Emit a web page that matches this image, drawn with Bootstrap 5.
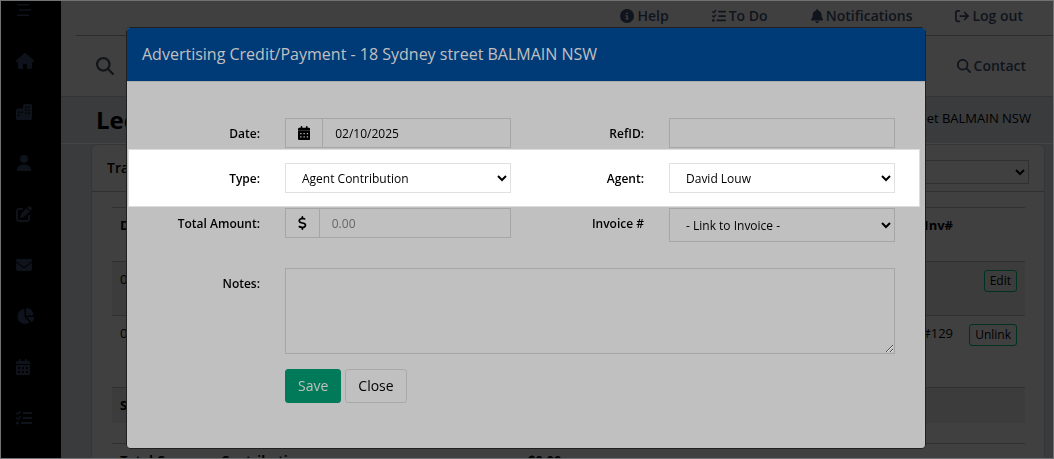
<!DOCTYPE html>
<html lang="en">
<head>
<meta charset="utf-8">
<meta name="viewport" content="width=device-width, initial-scale=1">
<title>Advertising Credit/Payment</title>
<link href="https://cdn.jsdelivr.net/npm/bootstrap@5.3.0/dist/css/bootstrap.min.css" rel="stylesheet">
<style>
  body { font-family: "Open Sans", sans-serif; font-size: 13px; line-height: 20px; color: #000; background: #3a3b3d; }
  .app-frame { height: 100vh; border: 1px solid #707273; }
  .side-rail { width: 60px; background: #000; padding: 1px 0 0 15px; gap: 35px; }
  .side-rail a { color: #0e131b; height: 16px; line-height: 0; }
  svg { fill: currentColor; }
  .side-rail svg { height: 16px; }
  .app-main { min-width: 0; }
  .top-zone { background: #404040; border-bottom: 1px solid #333436; color: #10141c; font-size: 14px; font-weight: 600; }
  .top-zone a { color: #10141c; text-decoration: none; display: flex; align-items: center; gap: 3px; }
  .top-zone a svg { height: 14px; }
  .top-links { height: 35px; margin-left: 15px; padding: 0 30px 4px 0; gap: 43px; border-bottom: 1px solid #2c2c2d; }
  .search-line { height: 60px; padding: 0 27px 0 35px; }
  .search-line button { color: #14161a; line-height: 0; }
  .title-line { height: 47px; padding: 0 22px 0 35px; border-bottom: 1px solid #444547; }
  .title-line h1 { font-size: 24px; line-height: 30px; font-weight: 700; }
  .ledger { margin: 0 8px 0 30px; background: #404040; border: 1px solid #353638; border-radius: 6px; }
  .ledger-head { height: 47px; padding: 0 15px; border-bottom: 1px solid #303030; font-weight: 600; font-size: 14px; }
  .ledger-head select { width: 226px; height: 24px; background: #404040; color: #000; border: 1px solid #303030; border-radius: 0; }
  .ledger-body { padding: 15px 19px 0 20px; }
  .ledger-table { width: 100%; table-layout: fixed; }
  .ledger-table th, .ledger-table td { padding: 7px 8px 8px; vertical-align: top; border-top: 1px solid #303030; white-space: nowrap; }
  .ledger-table th { font-weight: 700; }
  .ledger-table .tinted { background: #3c3c3c; }
  .totals-table { margin-top: 20px; }
  .totals-table th { padding-top: 6px; }
  .btn-mini { font-size: 12px; line-height: 16px; margin-top: 1px; padding: 2px 5px; border: 1px solid #00331f; border-radius: 3px; color: #000; background: transparent; }
  .pay-modal { padding-right: 2px; }
  .pay-modal .modal-dialog { max-width: 800px; margin-top: 27px; }
  .pay-modal .modal-content { background: #c0c0c0; border: 1px solid #1f2020; border-radius: 4px; color: #000; }
  .pay-modal .modal-header { background: #003b78; border-bottom: 1px solid #a9abad; padding: 15px; border-radius: 3px 3px 0 0; }
  .pay-modal .modal-title { color: #c0c0c0; font-size: 16px; line-height: 23px; font-weight: 400; }
  .pay-modal .modal-body { padding: 36px 0 45px; }
  .form-line { margin: 0 5px 0 1px; padding: 0 10px 0 14px; --bs-gutter-x: 0; }
  .form-line > .field { padding: 0 15px; }
  .form-line > label { padding: 6px 10px 0 0; text-align: right; font-size: 12px; font-weight: 600; }
  .spotlight { background: #fff; border: 1px solid #dcdcdc; padding: 13px 9px 13px 13px; margin-top: 1px; margin-bottom: 1px; }
  .notes-line { margin-top: 26px; }
  .action-line { margin-top: 15px; }
  .box, .box:focus { height: 30px; min-height: 0; padding: 4px 12px; font-size: 12px; line-height: 20px; color: #000; background: transparent; border: 1px solid #a6a6a6; border-radius: 0; }
  .box::placeholder { color: #666; }
  select.box, .ledger-head select { appearance: auto; }
  .spotlight .box { border-color: #e0e0e0; background: #fff; }
  select.box.tall { height: 34px; }
  textarea.box { height: 86px; }
  .box-addon { background: transparent; border: 1px solid #a6a6a6; border-radius: 0; padding: 0 12px; color: #000; }
  .box-addon svg { height: 14px; }
  .act { font-size: 14px; line-height: 20px; padding: 6px 12px; border-radius: 3px; }
  .act-save { background: #007a58; border-color: #007a58; color: #c0c0c0; }
  .act-close { border-color: #a9a9a9; color: #000; }
</style>
</head>
<body>
<div class="app-frame d-flex overflow-hidden">
  <nav class="side-rail d-flex flex-column flex-shrink-0" aria-label="Main">
    <a href="#" aria-label="Menu"><svg viewBox="0 0 16 16"><path d="M1 2h12v1.500H1zM3 7.300h12v1.500H3zM1 12.500h12V14H1z"/></svg></a>
    <a href="#" aria-label="Home"><svg viewBox="0 0 576 512"><path d="M575.800 255.500c0 18-15 32.100-32 32.100h-32l.7 160.200c0 36-20 64.200-48.500 64.200H352V376c0-17.700-14.300-32-32-32h-64c-17.700 0-32 14.300-32 32v136H112c-28 0-48-22-48-48V287.600H32c-18 0-32-14-32-32.100 0-9 3-17 10-24L266.400 8c7-7 15-8 22-8s15 2 21 7l255.400 224.500c8 7 12 15 11 24z"/></svg></a>
    <a href="#" aria-label="Properties"><svg viewBox="0 0 16 16"><path fill-rule="evenodd" d="M9 0h5.500A1.500 1.500 0 0 1 16 1.500v13a1.500 1.500 0 0 1-1.500 1.500h-13A1.500 1.500 0 0 1 0 14.500v-8A2 2 0 0 1 2 4.500h5V2A2 2 0 0 1 9 0zM9 2.500v1.500h1.500V2.500zm3 0v1.500h1.500V2.500zM9 5.500v1.500h1.500V5.500zm3 0v1.500h1.500V5.500zM9 8.500v1.500h1.500V8.500zm3 0v1.500h1.500V8.500zM2 7.500V9h1.500V7.500zm0 3V12h1.500v-1.500zm3-3V9h1.500V7.500z"/></svg></a>
    <a href="#" aria-label="People"><svg viewBox="-32 0 512 512"><path d="M224 256a128 128 0 1 0 0-256 128 128 0 1 0 0 256zm-45.700 48C79.800 304 0 383.800 0 482.300 0 498.700 13.300 512 29.700 512h388.600c16.400 0 29.700-13.300 29.700-29.700C448 383.800 368.200 304 269.700 304z"/></svg></a>
    <a href="#" aria-label="Edit"><svg viewBox="0 0 512 512"><path d="M471.600 21.700c-21.900-21.900-57.300-21.900-79.200 0L362.300 51.700l97.900 97.900 30.100-30.100c21.900-21.900 21.900-57.300 0-79.200zM172.400 241.700c-6.100 6.100-10.800 13.600-13.500 21.900l-29.600 88.800c-2.900 8.600-.6 18.100 5.800 24.600s15.900 8.700 24.600 5.800l88.800-29.600c8.200-2.700 15.700-7.400 21.900-13.500L437.700 172.300 339.700 74.300zM96 64c-53 0-96 43-96 96v256c0 53 43 96 96 96h256c53 0 96-43 96-96v-96c0-17.700-14.300-32-32-32s-32 14.300-32 32v96c0 17.700-14.300 32-32 32H96c-17.700 0-32-14.300-32-32V160c0-17.700 14.300-32 32-32h96c17.700 0 32-14.300 32-32s-14.300-32-32-32z"/></svg></a>
    <a href="#" aria-label="Mail"><svg viewBox="0 0 512 512"><path d="M48 64C21.500 64 0 85.500 0 112c0 15.100 7.100 29.300 19.200 38.400l217.600 163.200c11.400 8.500 27 8.500 38.400 0l217.600-163.200C504.900 141.300 512 127.100 512 112c0-26.500-21.500-48-48-48zM0 176v208c0 35.300 28.700 64 64 64h384c35.300 0 64-28.700 64-64V176L294.400 339.200c-22.800 17.100-54 17.100-76.800 0z"/></svg></a>
    <a href="#" aria-label="Reports"><svg viewBox="-16 0 576 512"><path d="M304 240V16.600c0-9 7-16.600 16-16.600C443.700 0 544 100.300 544 224c0 9-7.600 16-16.600 16zM32 272C32 150.700 122.100 50.300 239 34.300c9.200-1.300 17 6.100 17 15.400V288l156.500 156.500c6.700 6.700 6.200 17.700-1.500 23.100C371.800 495.600 323.800 512 272 512 139.500 512 32 404.600 32 272zm526.400 16c9.300 0 16.600 7.800 15.400 17-7.700 55.900-34.600 105.600-73.900 142.300-6 5.600-15.400 5.200-21.200-.7L320 288z"/></svg></a>
    <a href="#" aria-label="Calendar"><svg viewBox="0 0 448 512"><path fill-rule="evenodd" d="M96 32v32H48C21.500 64 0 85.500 0 112v48h448v-48c0-26.500-21.500-48-48-48h-48V32c0-43-64-43-64 0v32H160V32c0-43-64-43-64 0zM448 192H0v272c0 26.500 21.500 48 48 48h352c26.500 0 48-21.500 48-48zM64 256h64v64H64zm128 0h64v64h-64zm128 0h64v64h-64zM64 384h64v64H64zm128 0h64v64h-64zm128 0h64v64h-64z"/></svg></a>
    <a href="#" aria-label="Tasks"><svg viewBox="0 0 512 512"><path d="M152 38c10 9 11 24 2 34L82 152c-9 10-24 10-34 1L7 113c-9-10-9-25 0-34s25-9 34 0l22 22 55-61c9-10 24-11 34-2zm0 160c10 9 11 24 2 34l-72 80c-9 10-24 10-34 1L7 273c-9-10-9-25 0-34s25-9 34 0l22 22 55-61c9-10 24-11 34-2zM224 64h288v64H224zm0 160h288v64H224zm-64 160h352v64H160zM48 368a48 48 0 1 1 0 96 48 48 0 1 1 0-96z"/></svg></a>
  </nav>

  <div class="app-main flex-grow-1">
    <header class="top-zone">
      <div class="top-links d-flex justify-content-end align-items-center">
        <a href="#"><svg viewBox="0 0 512 512"><path d="M256 512A256 256 0 1 0 256 0a256 256 0 1 0 0 512zM216 336h24v-64h-24c-13.300 0-24-10.700-24-24s10.700-24 24-24h48c13.300 0 24 10.700 24 24v88h8c13.300 0 24 10.700 24 24s-10.700 24-24 24h-80c-13.300 0-24-10.700-24-24s10.700-24 24-24zm40-208a32 32 0 1 1 0 64 32 32 0 1 1 0-64z"/></svg>Help</a>
        <a href="#"><svg viewBox="0 0 512 512"><path d="M152 38c10 9 11 24 2 34L82 152c-9 10-24 10-34 1L7 113c-9-10-9-25 0-34s25-9 34 0l22 22 55-61c9-10 24-11 34-2zm0 160c10 9 11 24 2 34l-72 80c-9 10-24 10-34 1L7 273c-9-10-9-25 0-34s25-9 34 0l22 22 55-61c9-10 24-11 34-2zM224 96c0-18 14-32 32-32h224a32 32 0 0 1 0 64H256c-18 0-32-14-32-32zm0 160c0-18 14-32 32-32h224a32 32 0 0 1 0 64H256c-18 0-32-14-32-32zm-64 160c0-18 14-32 32-32h288a32 32 0 0 1 0 64H192c-18 0-32-14-32-32zM48 368a48 48 0 1 1 0 96 48 48 0 1 1 0-96z"/></svg>To Do</a>
        <a href="#"><svg viewBox="0 0 448 512"><path d="M224 0c-17.700 0-32 14.300-32 32v19.200C119 66 64 130.600 64 208v18.800c0 47-17.300 92.400-48.500 127.600l-7.400 8.300c-8.400 9.400-10.400 22.900-5.300 34.400S19.400 416 32 416h384c12.600 0 24-7.400 29.200-18.900s3.100-25-5.300-34.400l-7.400-8.300C401.300 319.200 384 273.900 384 226.800V208c0-77.400-55-142-128-156.800V32c0-17.700-14.300-32-32-32zm45.300 493.300c12-12 18.700-28.300 18.700-45.300H160c0 17 6.700 33.300 18.700 45.300S207 512 224 512s33.300-6.700 45.300-18.700z"/></svg>Notifications</a>
        <a href="#"><svg viewBox="0 0 512 512"><path d="M502.600 278.600c12.500-12.500 12.500-32.800 0-45.300l-128-128c-12.500-12.500-32.800-12.500-45.300 0s-12.500 32.800 0 45.300L402.700 224H192c-17.700 0-32 14.300-32 32s14.300 32 32 32h210.700l-73.400 73.400c-12.500 12.500-12.500 32.800 0 45.300s32.800 12.500 45.300 0zM160 96c17.700 0 32-14.300 32-32s-14.300-32-32-32H96C43 32 0 75 0 128v256c0 53 43 96 96 96h64c17.700 0 32-14.300 32-32s-14.300-32-32-32H96c-17.700 0-32-14.300-32-32V128c0-17.700 14.300-32 32-32z"/></svg>Log out</a>
      </div>
      <div class="search-line d-flex justify-content-between align-items-center">
        <button type="button" class="btn border-0 p-0" aria-label="Search"><svg width="18" height="18" viewBox="0 0 512 512"><path d="M416 208c0 45.900-14.900 88.300-40 122.700l126.600 126.700c12.500 12.500 12.500 32.800 0 45.300s-32.800 12.500-45.300 0L330.700 376C296.300 401.200 253.900 416 208 416 93.100 416 0 322.900 0 208S93.100 0 208 0s208 93.100 208 208zM208 352a144 144 0 1 0 0-288 144 144 0 1 0 0 288z"/></svg></button>
        <a href="#"><svg viewBox="0 0 512 512"><path d="M416 208c0 45.900-14.900 88.300-40 122.700l126.600 126.700c12.500 12.500 12.500 32.800 0 45.300s-32.800 12.500-45.300 0L330.700 376C296.300 401.200 253.900 416 208 416 93.100 416 0 322.900 0 208S93.100 0 208 0s208 93.100 208 208zM208 352a144 144 0 1 0 0-288 144 144 0 1 0 0 288z"/></svg>Contact</a>
      </div>
    </header>
    <div class="title-line d-flex justify-content-between align-items-center">
      <h1 class="m-0">Ledger</h1>
      <span class="pb-1">18 Sydney street BALMAIN NSW</span>
    </div>
    <section class="ledger">
      <div class="ledger-head d-flex justify-content-between align-items-center">
        <span>Transactions</span>
        <select class="mt-2" aria-label="Filter"><option></option></select>
      </div>
      <div class="ledger-body">
        <table class="ledger-table">
          <colgroup><col><col style="width:433px"><col style="width:64px"></colgroup>
          <thead><tr style="height:54px"><th>Date</th><th class="text-end">Inv#</th><th></th></tr></thead>
          <tbody>
            <tr class="tinted" style="height:54px"><td>02/10/2025</td><td></td><td class="text-end"><button class="btn-mini" type="button">Edit</button></td></tr>
            <tr style="height:72px"><td>02/10/2025</td><td class="text-end">#129</td><td class="text-end ps-0"><button class="btn-mini" type="button">Unlink</button></td></tr>
            <tr class="tinted"><th>Summary</th><td></td><td></td></tr>
          </tbody>
        </table>
        <table class="ledger-table totals-table">
          <colgroup><col style="width:408px"><col></colgroup>
          <tbody><tr><th>Total Company Contribution</th><th>$0.00</th></tr></tbody>
        </table>
      </div>
    </section>
  </div>
</div>

<div class="modal pay-modal d-block" role="dialog" aria-labelledby="payTitle">
  <div class="modal-dialog mb-0">
    <form class="modal-content">
      <div class="modal-header"><h5 class="modal-title" id="payTitle">Advertising Credit/Payment - 18 Sydney street BALMAIN NSW</h5></div>
      <div class="modal-body">
        <div class="row form-line">
          <label class="col-2" for="fDate">Date:</label>
          <div class="col-4 field"><div class="input-group">
            <span class="input-group-text box-addon"><svg viewBox="0 0 448 512"><path fill-rule="evenodd" d="M96 32v32H48C21.500 64 0 85.500 0 112v48h448v-48c0-26.500-21.500-48-48-48h-48V32c0-43-64-43-64 0v32H160V32c0-43-64-43-64 0zM448 176H0v288c0 26.500 21.500 48 48 48h352c26.500 0 48-21.500 48-48zM80 256h48v48H80zm120 0h48v48h-48zm120 0h48v48h-48zM80 376h48v48H80zm120 0h48v48h-48zm120 0h48v48h-48z"/></svg></span>
            <input class="form-control box" id="fDate" type="text" value="02/10/2025"></div></div>
          <label class="col-2" for="fRef">RefID:</label>
          <div class="col-4 field"><input class="form-control box" id="fRef" type="text"></div>
        </div>
        <div class="row form-line spotlight">
          <label class="col-2" for="fType">Type:</label>
          <div class="col-4 field"><select class="form-control box" id="fType"><option>Agent Contribution</option></select></div>
          <label class="col-2" for="fAgent">Agent:</label>
          <div class="col-4 field"><select class="form-control box" id="fAgent"><option>David Louw</option></select></div>
        </div>
        <div class="row form-line">
          <label class="col-2" for="fAmount">Total Amount:</label>
          <div class="col-4 field"><div class="input-group">
            <span class="input-group-text box-addon"><svg viewBox="0 0 320 512"><path d="M160 0c17.700 0 32 14.300 32 32v35.700c1.600.2 3.100.4 4.700.7 10.600 1.600 42.100 6.700 55.100 10 17.100 4.300 27.500 21.700 23.200 38.900s-21.700 27.500-38.900 23.200c-9.300-2.400-37.600-7-48.900-8.700-32.100-4.800-59.600-2.400-78.500 4.900-18.300 7-25.900 16.900-27.900 28-1.900 10.700-.5 16.800 1.300 20.600 1.900 4 5.600 8.500 12.900 13.400 16.200 10.800 41.100 17.900 73.300 26.700l2.800.8c28.400 7.700 63.200 17.200 89 34.300 14.100 9.400 27.300 22.100 35.500 39.700 8.300 17.800 10.100 37.800 6.300 59.100-6.900 38-33.100 63.400-65.600 76.700-13.700 5.600-28.600 9.200-44.400 11V480c0 17.700-14.300 32-32 32s-32-14.300-32-32v-34.900l-1.300-.2c-24.400-3.800-64.500-14.300-91.500-26.300-16.100-7.200-23.400-26.100-16.200-42.200s26.100-23.400 42.200-16.200c20.900 9.300 55.300 18.500 75.200 21.600 31.900 4.700 58.200 2 76-5.300 16.900-6.900 24.600-16.900 26.800-28.900 1.900-10.600.4-16.700-1.300-20.400-1.900-4-5.600-8.400-13-13.300-16.400-10.700-41.500-17.700-74-26.300l-2.800-.7c-28.300-7.700-63.200-17-89.100-34-14.100-9.300-27.200-22-35.400-39.700-8.300-17.800-10-37.800-6.200-59.100C24.800 115 54.200 90.400 87 77.800c13-5 26.900-8.200 41-10.100V32c0-17.700 14.300-32 32-32z"/></svg></span>
            <input class="form-control box" id="fAmount" type="text" placeholder="0.00"></div></div>
          <label class="col-2" for="fInvoice">Invoice #</label>
          <div class="col-4 field"><select class="form-control box tall" id="fInvoice"><option>- Link to Invoice -</option></select></div>
        </div>
        <div class="row form-line notes-line">
          <label class="col-2" for="fNotes">Notes:</label>
          <div class="col-10 field"><textarea class="form-control box" id="fNotes"></textarea></div>
        </div>
        <div class="row form-line action-line">
          <div class="col-10 offset-2 field d-flex gap-1">
            <button type="button" class="btn act act-save">Save</button>
            <button type="button" class="btn act act-close">Close</button>
          </div>
        </div>
      </div>
    </form>
  </div>
</div>
<script src="https://cdn.jsdelivr.net/npm/bootstrap@5.3.0/dist/js/bootstrap.bundle.min.js"></script>
</body>
</html>
